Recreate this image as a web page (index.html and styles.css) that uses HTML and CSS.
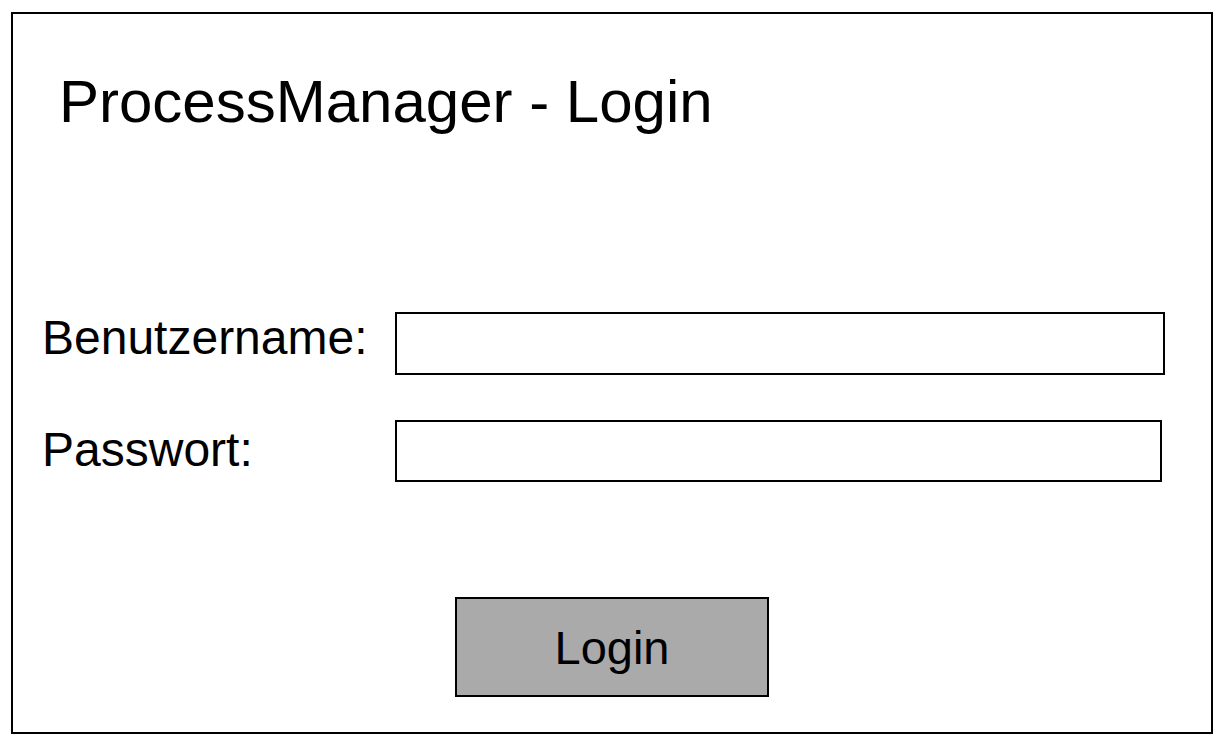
FILE: index.html
```html
<!DOCTYPE html>
<html lang="de">
<head>
<meta charset="utf-8">
<title>ProcessManager - Login</title>
<link rel="stylesheet" href="styles.css">
</head>
<body>
<div class="frame">
  <h1 class="title">ProcessManager - Login</h1>
  <form class="form">
    <div class="row">
      <label class="label" for="user">Benutzername:</label>
      <input class="field field-user" id="user" type="text">
    </div>
    <div class="row row-pass">
      <label class="label label-pass" for="pass">Passwort:</label>
      <input class="field field-pass" id="pass" type="password">
    </div>
    <div class="actions">
      <button class="btn" type="button">Login</button>
    </div>
  </form>
</div>
</body>
</html>
```

FILE: styles.css
```css
html, body {
  margin: 0;
  padding: 0;
  background: #ffffff;
}

body {
  font-family: "Liberation Sans", Arial, Helvetica, sans-serif;
  color: #000;
}

.frame {
  box-sizing: border-box;
  margin: 12px 0 0 11px;
  width: 1202px;
  height: 722px;
  border: 2px solid #000;
  display: flex;
  flex-direction: column;
}

.title {
  margin: 58px 0 0 46px;
  font-size: 60px;
  line-height: 60px;
  font-weight: normal;
}

.form {
  margin: 180px 0 0 29px;
  display: flex;
  flex-direction: column;
}

.row {
  display: flex;
  align-items: flex-start;
}

.row-pass {
  margin-top: 45px;
}

.label {
  width: 353px;
  font-size: 48px;
  line-height: 48px;
  padding-top: 2px;
}

.label-pass {
  padding-top: 6px;
}

.field {
  box-sizing: border-box;
  border: 2px solid #000;
  background: #fff;
  padding: 0;
  margin: 0;
  outline: none;
}

.field-user {
  width: 770px;
  height: 63px;
}

.field-pass {
  width: 767px;
  height: 62px;
}

.actions {
  margin-top: 115px;
  padding-left: 413px;
  display: flex;
}

.btn {
  box-sizing: border-box;
  width: 314px;
  height: 100px;
  border: 2px solid #000;
  background: #aaaaaa;
  font-family: "Liberation Sans", Arial, Helvetica, sans-serif;
  font-size: 47px;
  color: #000;
  padding: 0;
  margin: 0;
}
```
